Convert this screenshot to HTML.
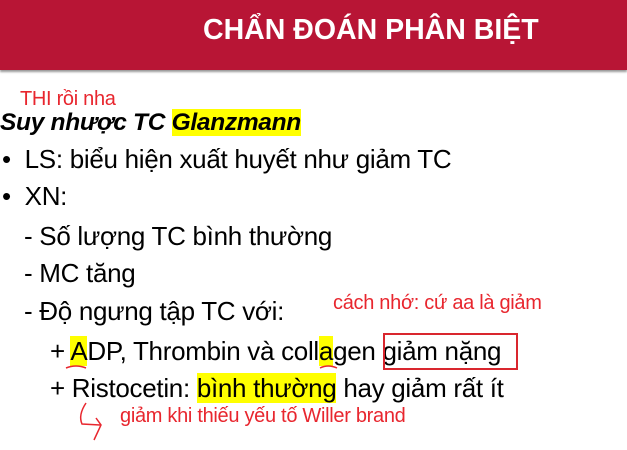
<!DOCTYPE html>
<html><head><meta charset="utf-8"><style>
body{margin:0;width:627px;height:450px;background:#fff;position:relative;overflow:hidden;font-family:"Liberation Sans",sans-serif}
.bar{position:absolute;left:0;top:0;width:627px;height:70px;background:#b81535;box-shadow:0 2px 2px #999}
.t{position:absolute;left:203px;top:14px;color:#fff;font-weight:bold;font-size:28.5px;white-space:nowrap}
.l{position:absolute;white-space:nowrap;font-size:26px;color:#000;letter-spacing:-0.3px}
.r{position:absolute;white-space:nowrap;color:#e8262e;font-size:20px;letter-spacing:-0.3px}
.y{background:#ffff00}
</style></head><body>
<div class="bar"></div>
<div class="t">CHẨN ĐOÁN PHÂN BIỆT</div>
<div class="r" style="left:20px;top:88px">THI rồi nha</div>
<div class="l" style="left:0;top:109px;font-weight:bold;font-style:italic;font-size:24.5px">Suy nhược TC <span class="y">Glanzmann</span></div>
<div class="l" style="left:2px;top:144px">•&nbsp; LS: biểu hiện xuất huyết như giảm TC</div>
<div class="l" style="left:2px;top:181px">•&nbsp; XN:</div>
<div class="l" style="left:24px;top:221px">- Số lượng TC bình thường</div>
<div class="l" style="left:24px;top:258px">- MC tăng</div>
<div class="l" style="left:24px;top:296px">- Độ ngưng tập TC với:</div>
<div class="r" style="left:333px;top:292px">cách nhớ: cứ aa là giảm</div>
<div class="l" style="left:50px;top:336px">+ <span class="y">A</span>DP, Thrombin và coll<span class="y">a</span>gen giảm nặng</div>
<div style="position:absolute;left:383px;top:333px;width:135px;height:37px;border:2px solid #d9262e;box-sizing:border-box"></div>
<div class="l" style="left:50px;top:373px">+ Ristocetin: <span class="y">bình thường</span> hay giảm rất ít</div>
<div class="r" style="left:120px;top:405px">giảm khi thiếu yếu tố Willer brand</div>
<svg style="position:absolute;left:0;top:0" width="627" height="450"><g fill="none" stroke="#e8262e" stroke-width="1.5">
<path d="M66 368 Q76 364 86 368"/><path d="M320 368 Q328 364 337 368"/>
<path d="M86 403 Q78 415 82 424 L100 425"/><path d="M96 418 L101 425 L94 440"/></g></svg>
</body></html>
